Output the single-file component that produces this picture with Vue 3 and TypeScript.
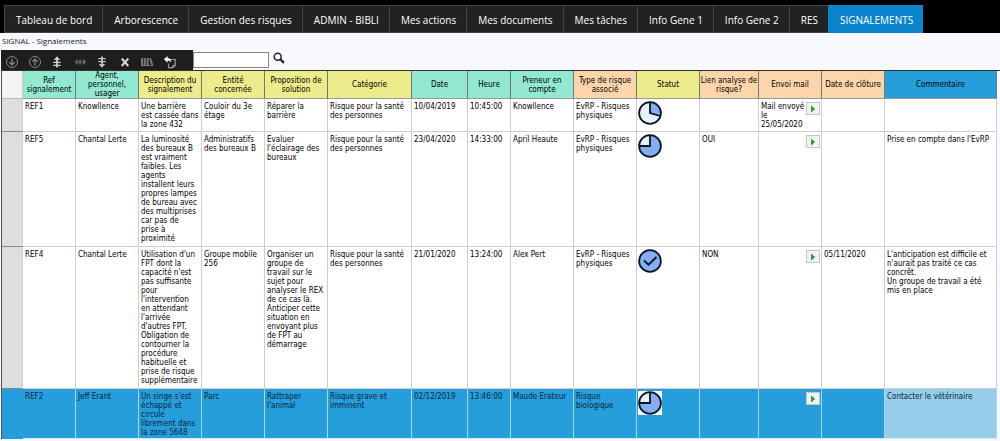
<script setup lang="ts">
interface Column {
  key: string
  label: string
  tone: 'green' | 'yellow' | 'orange' | 'blue'
}

interface Report {
  ref: string
  agent: string
  description: string
  entity: string
  solution: string
  category: string
  date: string
  time: string
  owner: string
  riskType: string
  status: 'started' | 'advanced' | 'done'
  linked: string
  mail: string
  closed: string
  comment: string
  selected?: boolean
}

const tabs: string[] = [
  'Tableau de bord',
  'Arborescence',
  'Gestion des risques',
  'ADMIN - BIBLI',
  'Mes actions',
  'Mes documents',
  'Mes tâches',
  'Info Gene 1',
  'Info Gene 2',
  'RES',
  'SIGNALEMENTS',
]
const activeTab = 'SIGNALEMENTS'

const columns: Column[] = [
  { key: 'ref', label: 'Ref\nsignalement', tone: 'green' },
  { key: 'agent', label: 'Agent,\npersonnel,\nusager', tone: 'green' },
  { key: 'description', label: 'Description du\nsignalement', tone: 'yellow' },
  { key: 'entity', label: 'Entité\nconcernée', tone: 'yellow' },
  { key: 'solution', label: 'Proposition de\nsolution', tone: 'yellow' },
  { key: 'category', label: 'Catégorie', tone: 'yellow' },
  { key: 'date', label: 'Date', tone: 'green' },
  { key: 'time', label: 'Heure', tone: 'green' },
  { key: 'owner', label: 'Preneur en\ncompte', tone: 'green' },
  { key: 'type', label: 'Type de risque\nassocié', tone: 'orange' },
  { key: 'status', label: 'Statut', tone: 'yellow' },
  { key: 'linked', label: 'Lien analyse de\nrisque?', tone: 'orange' },
  { key: 'mail', label: 'Envoi mail', tone: 'orange' },
  { key: 'closed', label: 'Date de clôture', tone: 'orange' },
  { key: 'comment', label: 'Commentaire', tone: 'blue' },
]

const reports: Report[] = [
  {
    ref: 'REF1',
    agent: 'Knowllence',
    description: 'Une barrière\nest cassée dans\nla zone 432',
    entity: 'Couloir du 3e\nétage',
    solution: 'Réparer la\nbarrière',
    category: 'Risque pour la santé\ndes personnes',
    date: '10/04/2019',
    time: '10:45:00',
    owner: 'Knowllence',
    riskType: 'EvRP - Risques\nphysiques',
    status: 'started',
    linked: '',
    mail: 'Mail envoyé\nle\n25/05/2020',
    closed: '',
    comment: '',
  },
  {
    ref: 'REF5',
    agent: 'Chantal Lerte',
    description:
      'La luminosité\ndes bureaux B\nest vraiment\nfaibles. Les\nagents\ninstallent leurs\npropres lampes\nde bureau avec\ndes multiprises\ncar pas de\nprise à\nproximité',
    entity: 'Administratifs\ndes bureaux B',
    solution: "Evaluer\nl'éclairage des\nbureaux",
    category: 'Risque pour la santé\ndes personnes',
    date: '23/04/2020',
    time: '14:33:00',
    owner: 'April Heaute',
    riskType: 'EvRP - Risques\nphysiques',
    status: 'advanced',
    linked: 'OUI',
    mail: '',
    closed: '',
    comment: "Prise en compte dans l'EvRP",
  },
  {
    ref: 'REF4',
    agent: 'Chantal Lerte',
    description:
      "Utilisation d'un\nFPT dont la\ncapacité n'est\npas suffisante\npour\nl'intervention\nen attendant\nl'arrivée\nd'autres FPT.\nObligation de\ncontourner la\nprocédure\nhabituelle et\nprise de risque\nsupplémentaire",
    entity: 'Groupe mobile\n256',
    solution:
      'Organiser un\ngroupe de\ntravail sur le\nsujet pour\nanalyser le REX\nde ce cas là.\nAnticiper cette\nsituation en\nenvoyant plus\nde FPT au\ndémarrage',
    category: 'Risque pour la santé\ndes personnes',
    date: '21/01/2020',
    time: '13:24:00',
    owner: 'Alex Pert',
    riskType: 'EvRP - Risques\nphysiques',
    status: 'done',
    linked: 'NON',
    mail: '',
    closed: '05/11/2020',
    comment: "L'anticipation est difficile et\nn'aurait pas traité ce cas\nconcrêt.\nUn groupe de travail a été\nmis en place",
  },
  {
    ref: 'REF2',
    agent: 'Jeff Erant',
    description: "Un singe s'est\néchappé et\ncircule\nlibrement dans\nla zone 5648",
    entity: 'Parc',
    solution: "Rattraper\nl'animal",
    category: 'Risque grave et\nimminent',
    date: '02/12/2019',
    time: '13:46:00',
    owner: 'Maude Erateur',
    riskType: 'Risque\nbiologique',
    status: 'advanced',
    linked: '',
    mail: '',
    closed: '',
    comment: 'Contacter le vétérinaire',
    selected: true,
  },
]
</script>

<template>
  <div class="page">
    <nav class="tabs" aria-label="Navigation principale">
      <a v-for="tab in tabs" :key="tab" href="#" class="tab" :class="{ active: tab === activeTab }">{{ tab }}</a>
    </nav>

    <h1 class="title">SIGNAL - Signalements</h1>

    <div class="tools">
      <div class="toolbar" role="toolbar" aria-label="Actions">
        <button type="button" aria-label="Descendre">
          <svg viewBox="0 0 14 14" fill="none" stroke="#858585">
            <circle cx="7" cy="7" r="5.5" />
            <path d="M7 3.5v6M4.3 7.2 7 9.9l2.7-2.7" stroke-width="1.3" />
          </svg>
        </button>
        <button type="button" aria-label="Monter">
          <svg viewBox="0 0 14 14" fill="none" stroke="#858585">
            <circle cx="7" cy="7" r="5.5" />
            <path d="M7 10.5v-6M4.3 6.8 7 4.1l2.7 2.7" stroke-width="1.3" />
          </svg>
        </button>
        <button type="button" aria-label="Insérer au-dessus">
          <svg viewBox="0 0 14 14" fill="#d0d0d0">
            <path d="M7 1.2 10.2 5H7.9v1.8h2.8v1.3H7.9v1.7h2.8v1.3H7.9v1.4H6.1v-1.4H3.3V9.800h2.800V8.100H3.300V6.800h2.800V5H3.800z" />
          </svg>
        </button>
        <button type="button" aria-label="Insérer à côté">
          <svg viewBox="0 0 14 14" fill="none" stroke="#777" stroke-width="1.2">
            <path d="M1.500 7h10.500M4 4.500v5M7 4.500v5M9.800 4.600 12.400 7 9.800 9.400" />
          </svg>
        </button>
        <button type="button" aria-label="Insérer en dessous">
          <svg viewBox="0 0 14 14" fill="#c4c4c4">
            <path d="M7 12.8 10.2 9H7.9V7.2h2.8V5.900H7.900V4.200h2.800V2.900H7.900V1.500H6.100v1.400H3.300v1.300h2.800v1.700H3.300v1.300h2.800V9H3.800z" />
          </svg>
        </button>
        <button type="button" aria-label="Supprimer">
          <svg viewBox="0 0 14 14" fill="none" stroke="#d8d8d8" stroke-width="2">
            <path d="m3.7 3.5 6.6 7.5M10.3 3.5 3.7 11" />
          </svg>
        </button>
        <button type="button" aria-label="Bibliothèque">
          <svg viewBox="0 0 14 14" fill="none" stroke="#777" stroke-width="2">
            <path d="M2 3v8M4.8 3v8M7.6 3v8M10 3.2l2.5 7.4" />
            <path d="M1 10.6h12" stroke-width="1" />
          </svg>
        </button>
        <button type="button" aria-label="Exporter">
          <svg viewBox="0 0 14 14">
            <path d="M5.5 4.5h6.7v6L10 12.6H5.5v-4" fill="none" stroke="#999" stroke-width="1.2" />
            <path d="M9.8 12.5v-2.2h2.3" fill="none" stroke="#999" />
            <path d="M.8 4.3 4.6 1v2.1c2.4 0 3.5 1.5 3.6 4.4C7.3 6.2 6.3 5.7 4.6 5.7v2z" fill="#f2f2f2" />
          </svg>
        </button>
      </div>
      <input class="search" type="text" aria-label="Rechercher" />
      <button class="search-button" type="button" aria-label="Lancer la recherche">
        <svg viewBox="0 0 12 12" fill="none" stroke="#222">
          <circle cx="4.7" cy="4.7" r="3.5" stroke-width="1.5" />
          <path d="m7.3 7.3 3.6 3.6" stroke-width="2.2" />
        </svg>
      </button>
    </div>

    <div class="grid">
      <table>
        <colgroup>
          <col class="w-handle" />
          <col v-for="column in columns" :key="column.key" :class="`w-${column.key}`" />
        </colgroup>
        <thead>
          <tr>
            <td class="corner"></td>
            <th v-for="column in columns" :key="column.key" scope="col" :class="column.tone">{{ column.label }}</th>
          </tr>
        </thead>
        <tbody>
          <tr v-for="report in reports" :key="report.ref" :class="{ selected: report.selected }">
            <td class="handle"></td>
            <td>{{ report.ref }}</td>
            <td>{{ report.agent }}</td>
            <td>{{ report.description }}</td>
            <td>{{ report.entity }}</td>
            <td>{{ report.solution }}</td>
            <td>{{ report.category }}</td>
            <td>{{ report.date }}</td>
            <td>{{ report.time }}</td>
            <td>{{ report.owner }}</td>
            <td>{{ report.riskType }}</td>
            <td class="status">
              <svg viewBox="0 0 24 24" role="img" :aria-label="report.status">
                <circle cx="12" cy="12" r="10.8" :fill="report.status === 'done' ? '#84adf4' : '#e8f1fd'" />
                <path v-if="report.status === 'started'" d="M12 12V1.2A10.8 10.8 0 0 1 22.3 15z" fill="#84adf4" />
                <path v-if="report.status === 'advanced'" d="M12 12V1.2A10.8 10.8 0 1 1 1.2 12z" fill="#84adf4" />
                <g fill="none" stroke="#0b1424" stroke-width="1.8">
                  <circle cx="12" cy="12" r="10.9" />
                  <path v-if="report.status === 'started'" d="M12 1v11l10.3 3" />
                  <path v-if="report.status === 'advanced'" d="M12 1v11H1" />
                  <path v-if="report.status === 'done'" d="m6 11.5 4.5 4.2L18.5 8" />
                </g>
              </svg>
            </td>
            <td>{{ report.linked }}</td>
            <td class="mail">
              <div class="mail-row">
                <span>{{ report.mail }}</span>
                <button type="button" aria-label="Envoyer le mail">
                  <svg viewBox="0 0 8 8"><path d="M2 0.5 6.2 4 2 7.5z" fill="#3d9142" /></svg>
                </button>
              </div>
            </td>
            <td>{{ report.closed }}</td>
            <td class="comment">{{ report.comment }}</td>
          </tr>
        </tbody>
      </table>
    </div>
  </div>
</template>

<style>
html {
  background: #f8f8ff;
}
</style>

<style scoped>
.page {
  color: #000;
  font-family: 'DejaVu Sans Condensed', 'DejaVu Sans', Verdana, sans-serif;
  font-size: 8px;
  line-height: 9px;
}

button {
  padding: 0;
  border: 0;
  background: none;
}

svg {
  display: block;
}

.tabs {
  display: flex;
  padding: 5px 4px 0;
  background: #000;
}

.tab {
  padding: 2px 10px 0 11px;
  border: solid #444;
  border-width: 1px 0 1px 1px;
  background: #222;
  color: #fff;
  font-family: 'Open Sans', 'Segoe UI', sans-serif;
  font-size: 10px;
  line-height: 24px;
  text-decoration: none;
  white-space: nowrap;
}

.tab.active {
  border-color: #0a84cc;
  background: #0a84cc;
}

.title {
  margin: 0;
  padding: 1px 2px 2px;
  color: #222;
  font-family: 'Open Sans', 'Segoe UI', sans-serif;
  font-size: 8px;
  font-weight: 400;
  line-height: 14px;
}

.tools {
  display: flex;
  height: 20px;
  margin-left: 1px;
}

.toolbar {
  display: grid;
  grid-template-columns: repeat(8, 1fr);
  box-sizing: border-box;
  width: 192px;
  padding: 5px 12px 0 0;
  background: #1e1e1e;
}

.toolbar button {
  display: flex;
  justify-content: center;
}

.toolbar svg {
  width: 14px;
  height: 14px;
}

.search {
  box-sizing: border-box;
  width: 76px;
  height: 16px;
  margin-top: 2px;
  padding: 0 2px;
  border: 1px solid #858585;
  background: #fff;
  font: inherit;
}

.search-button {
  width: 12px;
  height: 12px;
  margin: 2px 0 0 4px;
}

.grid {
  margin-left: 1px;
  padding-right: 3px;
  border-top: 1px solid #333;
  border-left: 1px solid #555;
}

table {
  width: 100%;
  border-spacing: 0;
  table-layout: fixed;
}

.w-handle { width: 21px; }
.w-ref { width: 53px; }
.w-agent, .w-description, .w-entity, .w-solution,
.w-owner, .w-type, .w-status, .w-mail, .w-closed { width: 63px; }
.w-category { width: 84px; }
.w-date { width: 56px; }
.w-time { width: 43px; }
.w-linked { width: 59px; }

th {
  height: 27px;
  padding: 0;
  border-right: 1px solid #777;
  border-bottom: 1px solid #999;
  font-weight: 400;
  text-align: center;
  vertical-align: middle;
  white-space: pre;
}

.corner {
  border-right: 1px solid #ccc;
  border-bottom: 1px solid #bbb;
  background: #f3f3f3;
}

.green { background: #92e8d0; }
.yellow { background: #ecec8c; }
.orange { background: #fdd5aa; }
.blue { background: #259edb; }

tbody td {
  padding: 3px 0 2px 2px;
  border-right: 1px solid #cbced6;
  border-bottom: 1px solid #cbced6;
  background: #fff;
  vertical-align: top;
  white-space: pre;
}

tbody td.handle {
  border-bottom-color: #888;
  background: #dedede;
}

tbody tr:nth-child(2) td { height: 109px; }
tbody tr:nth-child(3) td { height: 136px; }

tbody td.status {
  padding: 2px 0 0 1px;
}

.status svg {
  width: 24px;
  height: 24px;
  background: #fff;
}

tbody td.mail {
  padding-right: 1px;
}

.mail-row {
  display: flex;
  justify-content: space-between;
}

.mail-row button {
  display: flex;
  flex: none;
  align-items: center;
  justify-content: center;
  width: 14px;
  height: 13px;
  border: 1px solid #c4c8c4;
  background: #f0f3f0;
}

.mail-row svg {
  width: 8px;
  height: 8px;
}

tbody tr.selected td {
  padding-bottom: 1px;
  border-right-color: #a9d9f1;
  border-bottom-color: #d5ebf7;
  background: #259edb;
  color: #0b2538;
}

tbody tr.selected td.handle {
  border-color: #259edb;
}

tbody tr.selected td.comment {
  background: #95cdeb;
}
</style>
